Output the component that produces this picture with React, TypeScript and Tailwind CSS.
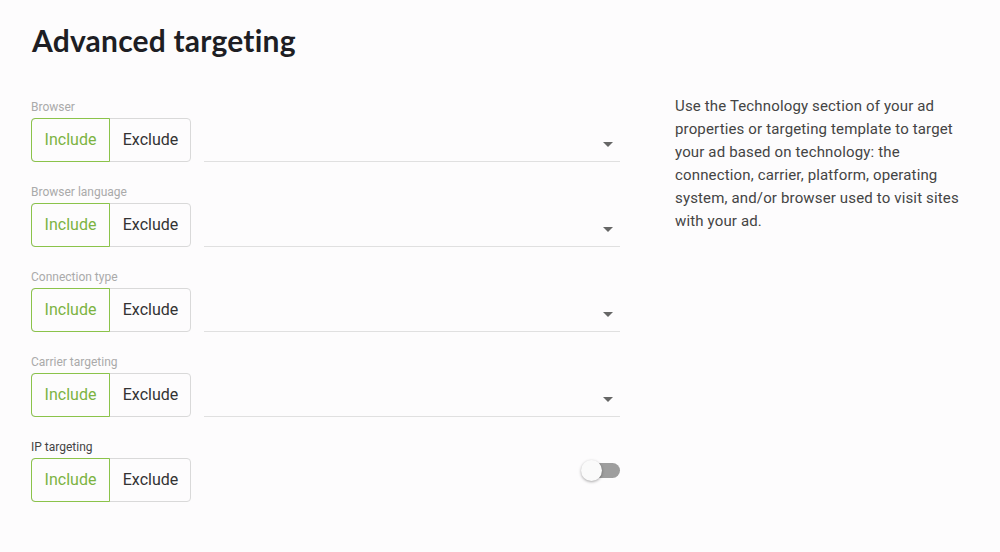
import React from "react";

const ROWS = [
  { label: "Browser", kind: "select" },
  { label: "Browser language", kind: "select" },
  { label: "Connection type", kind: "select" },
  { label: "Carrier targeting", kind: "select" },
  { label: "IP targeting", kind: "toggle" },
] as const;

function IncludeExclude() {
  return (
    <div className="flex h-[44px] w-[160px] shrink-0 rounded-[4px] border border-[#d9d9d9] text-[16px]">
      <div className="-m-px flex w-[79px] items-center justify-center rounded-l-[4px] border border-[#8bc34a] text-[#7cb342]">
        Include
      </div>
      <div className="flex flex-1 items-center justify-center pl-[2px] text-[#333]">Exclude</div>
    </div>
  );
}

export default function App() {
  return (
    <div
      className="h-[552px] w-[1000px] bg-[#fdfcfd] text-[#333]"
      style={{ fontFamily: "Roboto, 'Liberation Sans', sans-serif" }}
    >
      <h1 className="px-[32px] pt-[22px] text-[30px] leading-[36px] font-bold tracking-[0.2px] text-[#1e1e24] [font-family:Lato,'Liberation_Sans',sans-serif]">
        Advanced targeting
      </h1>
      <div className="flex gap-[55px] pl-[31px] pt-[42px]">
        <div className="flex w-[589px] flex-col gap-[23px]">
          {ROWS.map((row) => (
            <div key={row.label} className="flex flex-col">
              <span
                className={
                  row.kind === "toggle"
                    ? "h-[12px] text-[12px] leading-[14px] text-[#444]"
                    : "h-[12px] text-[12px] leading-[14px] text-[#aaa]"
                }
              >
                {row.label}
              </span>
              <div className="mt-[6px] flex items-stretch gap-[13px]">
                <IncludeExclude />
                {row.kind === "select" ? (
                  <div className="relative flex-1 border-b border-[#e0e0e0]">
                    <span className="absolute right-[7px] top-[24px] h-0 w-0 border-x-[5px] border-t-[5px] border-x-transparent border-t-[#666]" />
                  </div>
                ) : (
                  <div className="flex flex-1 items-start justify-end pt-[5px]">
                    <div className="relative h-[15px] w-[38px]">
                      <div className="absolute right-0 top-0 h-[15px] w-[34px] rounded-full bg-[#9e9e9e]" />
                      <div className="absolute -left-[1px] -top-[3px] h-[21px] w-[21px] rounded-full bg-[#fafafa] shadow-[0_1px_3px_rgba(0,0,0,0.35)]" />
                    </div>
                  </div>
                )}
              </div>
            </div>
          ))}
        </div>
        <p className="w-[300px] text-[15px] leading-[23px] tracking-[0.15px] text-[#444] mt-[-5px]">
          Use the Technology section of your ad properties or targeting template to target your
          ad based on technology: the connection, carrier, platform, operating system, and/or
          browser used to visit sites with your ad.
        </p>
      </div>
    </div>
  );
}
